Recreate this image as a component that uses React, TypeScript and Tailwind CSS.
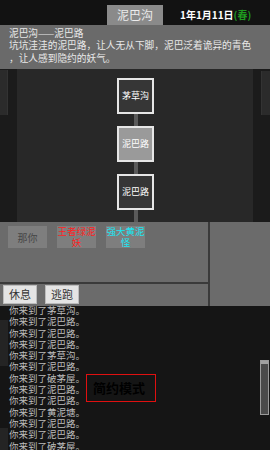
import React from "react";

const cjk = { fontFamily: '"Noto Sans CJK SC", "Noto Sans", sans-serif' };

const logLines = [
  "茅草沟",
  "泥巴路",
  "泥巴路",
  "泥巴路",
  "茅草沟",
  "泥巴路",
  "破茅屋",
  "泥巴路",
  "泥巴路",
  "黄泥塘",
  "泥巴路",
  "泥巴路",
  "破茅屋",
];

const MapNode = ({ label, current }: { label: string; current?: boolean }) => (
  <div
    className={`w-[37px] h-[36px] border-2 border-[#e6e6e6] flex items-center justify-center text-[9px] text-white ${
      current ? "bg-[#9a9a9a]" : "bg-[#363636]"
    }`}
  >
    {label}
  </div>
);

const Link = ({ grow }: { grow?: boolean }) => (
  <div className={`w-[4px] bg-[#5a5a5a] ${grow ? "flex-1" : "h-[12px]"}`} />
);

const EnemyButton = ({ top, bottom, color }: { top: string; bottom: string; color: string }) => (
  <div
    className={`w-[39px] h-[22px] bg-[#7e7e7e] flex flex-col items-center text-[9.5px] leading-[11px] whitespace-nowrap ${color}`}
  >
    <div>{top}</div>
    <div>{bottom}</div>
  </div>
);

const ActionButton = ({ label }: { label: string }) => (
  <div className="w-[34px] h-[19px] bg-[#e4e4e4] border border-[#bcbcbc] flex items-center justify-center text-[11px] text-[#333]">
    {label}
  </div>
);

export default function App() {
  return (
    <div className="w-[270px] h-[450px] flex flex-col bg-[#151515] overflow-hidden" style={cjk}>
      {/* top bar */}
      <div className="h-[25px] bg-[#121212] flex items-end pl-[107px]">
        <div className="w-[56px] h-[20px] bg-[#8a8a8a] flex items-center justify-center text-[12px] text-[#ececec]">
          泥巴沟
        </div>
        <div className="ml-[17px] self-center text-[10px] font-bold text-white pt-[4px]">
          1年1月11日<span className="text-[#1f9a1f]">(春)</span>
        </div>
      </div>

      {/* description */}
      <div className="h-[44px] bg-[#6a6a6a] px-[9px] pt-[2px] text-[9.7px] leading-[12.3px] text-[#e8e8e8] whitespace-nowrap">
        <div>泥巴沟——泥巴路</div>
        <div>坑坑洼洼的泥巴路，让人无从下脚，泥巴泛着诡异的青色</div>
        <div>，让人感到隐约的妖气。</div>
      </div>

      {/* map */}
      <div className="h-[153px] flex">
        <div className="w-[17px] bg-[#1b1b1b] pt-[1px]">
          <div className="w-[8px] h-[45px] bg-[#2b2b2b] border-r border-[#333]" />
        </div>
        <div className="flex-1 bg-[#282828] flex flex-col items-center pt-[9px] pl-[1px]">
          <MapNode label="茅草沟" />
          <Link />
          <MapNode label="泥巴路" current />
          <Link />
          <MapNode label="泥巴路" />
          <Link grow />
        </div>
        <div className="w-[17px] bg-[#1b1b1b] pt-[2px] flex justify-end">
          <div className="w-[9px] h-[44px] bg-[#2b2b2b] border-l border-[#333]" />
        </div>
      </div>

      {/* battle panel */}
      <div className="h-[84px] flex bg-[#6b6b6b]">
        <div className="w-[208px] flex flex-col">
          <div className="h-[60px] flex items-start gap-[10px] pl-[8px] pt-[4px]">
            <div className="w-[39px] h-[22px] bg-[#7e7e7e] flex items-center justify-center text-[10px] text-[#474747]">
              那你
            </div>
            <EnemyButton top="王者绿泥" bottom="妖" color="text-[#ff1f1f]" />
            <EnemyButton top="强大黄泥" bottom="怪" color="text-[#19e6f2]" />
          </div>
          <div className="h-[2px] bg-[#3a3a3a]" />
          <div className="flex-1 flex items-start gap-[8px] pl-[3px] pt-[1px]">
            <ActionButton label="休息" />
            <ActionButton label="逃跑" />
          </div>
        </div>
        <div className="w-[2px] bg-[#3a3a3a]" />
        <div className="flex-1" />
      </div>

      {/* log */}
      <div className="flex-1 relative flex overflow-hidden">
        <div className="w-[8px] flex flex-col">
          <div className="h-[14px]" />
          <div className="h-[46px] bg-[#242424]" />
          <div className="flex-1" />
          <div className="h-[22px] bg-[#242424]" />
        </div>
        <div className="flex-1 pl-[1px] -mt-[1px] text-[9.5px] leading-[11.3px] text-[#bcbcbc]">
          {logLines.map((place, i) => (
            <div key={i}>你来到了{place}。</div>
          ))}
        </div>
        <div className="absolute left-[260px] top-[54px] w-[9px] h-[55px] border border-[#9a9a9a] bg-[#4a4a4a] flex flex-col">
          <div className="h-[3px] bg-[#a0a0a0]" />
        </div>
        <div className="absolute left-[86px] top-[68px] w-[70px] h-[28px] border-[1.5px] border-[#e01010] flex items-center pl-[6px] text-[13px] font-bold text-black">
          简约模式
        </div>
      </div>
    </div>
  );
}
